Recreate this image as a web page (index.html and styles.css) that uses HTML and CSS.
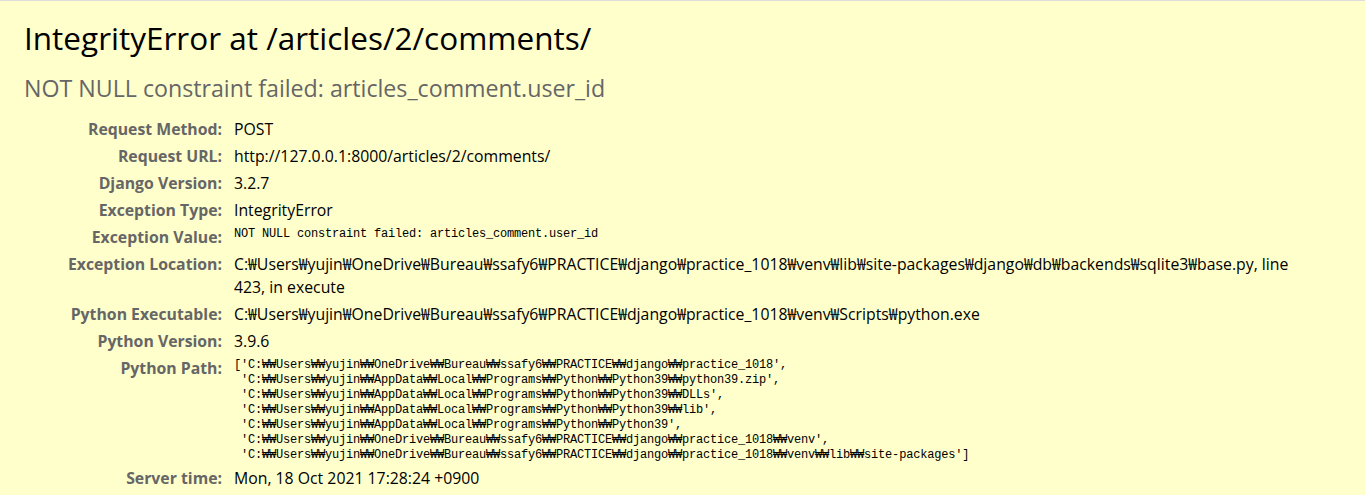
FILE: index.html
```html
<!DOCTYPE html>
<html>
<head>
<meta charset="utf-8">
<title>IntegrityError at /articles/2/comments/</title>
<link rel="stylesheet" href="styles.css">
</head>
<body>
<div class="summary">
  <h1 class="title">IntegrityError at /articles/2/comments/</h1>
  <h2 class="subtitle">NOT NULL constraint failed: articles_comment.user_id</h2>
  <table class="meta">
    <tbody>
      <tr><th>Request Method:</th><td>POST</td></tr>
      <tr><th>Request URL:</th><td>http://127.0.0.1:8000/articles/2/comments/</td></tr>
      <tr><th>Django Version:</th><td>3.2.7</td></tr>
      <tr><th>Exception Type:</th><td>IntegrityError</td></tr>
      <tr><th>Exception Value:</th><td><pre class="code">NOT NULL constraint failed: articles_comment.user_id</pre></td></tr>
      <tr><th>Exception Location:</th><td class="loc">C:₩Users₩yujin₩OneDrive₩Bureau₩ssafy6₩PRACTICE₩django₩practice_1018₩venv₩lib₩site-packages₩django₩db₩backends₩sqlite3₩base.py, line 423, in execute</td></tr>
      <tr><th>Python Executable:</th><td>C:₩Users₩yujin₩OneDrive₩Bureau₩ssafy6₩PRACTICE₩django₩practice_1018₩venv₩Scripts₩python.exe</td></tr>
      <tr><th>Python Version:</th><td>3.9.6</td></tr>
      <tr><th>Python Path:</th><td><pre class="code">['C:₩₩Users₩₩yujin₩₩OneDrive₩₩Bureau₩₩ssafy6₩₩PRACTICE₩₩django₩₩practice_1018',
 'C:₩₩Users₩₩yujin₩₩AppData₩₩Local₩₩Programs₩₩Python₩₩Python39₩₩python39.zip',
 'C:₩₩Users₩₩yujin₩₩AppData₩₩Local₩₩Programs₩₩Python₩₩Python39₩₩DLLs',
 'C:₩₩Users₩₩yujin₩₩AppData₩₩Local₩₩Programs₩₩Python₩₩Python39₩₩lib',
 'C:₩₩Users₩₩yujin₩₩AppData₩₩Local₩₩Programs₩₩Python₩₩Python39',
 'C:₩₩Users₩₩yujin₩₩OneDrive₩₩Bureau₩₩ssafy6₩₩PRACTICE₩₩django₩₩practice_1018₩₩venv',
 'C:₩₩Users₩₩yujin₩₩OneDrive₩₩Bureau₩₩ssafy6₩₩PRACTICE₩₩django₩₩practice_1018₩₩venv₩₩lib₩₩site-packages']</pre></td></tr>
      <tr><th>Server time:</th><td>Mon, 18 Oct 2021 17:28:24 +0900</td></tr>
    </tbody>
  </table>
</div>
</body>
</html>
```

FILE: styles.css
```css
html, body {
  margin: 0;
  padding: 0;
}
body {
  font-family: "Open Sans", "Noto Sans CJK KR", sans-serif;
  font-size: 15.8px;
  color: #000;
  background: #ffffcc;
  border-top: 1px solid #dcdcdc;
}
.summary {
  background: #ffffcc;
  padding: 15px 25px 0 24px;
}
.title {
  margin: 0;
  font-size: 31.5px;
  font-weight: normal;
  line-height: 44px;
}
.subtitle {
  margin: 12px 0 12px 0;
  font-size: 23.2px;
  font-weight: normal;
  line-height: 32px;
  color: #666;
}
.meta {
  border-collapse: collapse;
  width: 100%;
}
.meta th, .meta td {
  vertical-align: top;
  padding: 2px 4px;
  line-height: 23px;
}
.meta th {
  width: 194px;
  text-align: right;
  color: #666;
  font-weight: bold;
  padding-right: 8px;
  white-space: nowrap;
}
.meta td {
  padding-left: 4px;
}
.meta td.loc {
  padding-right: 40px;
}
.code {
  margin: 0;
  font-family: "Liberation Mono", monospace;
  font-size: 12px;
  letter-spacing: -0.2px;
  line-height: 15px;
  white-space: pre-wrap;
  padding-top: 1px;
}
```
